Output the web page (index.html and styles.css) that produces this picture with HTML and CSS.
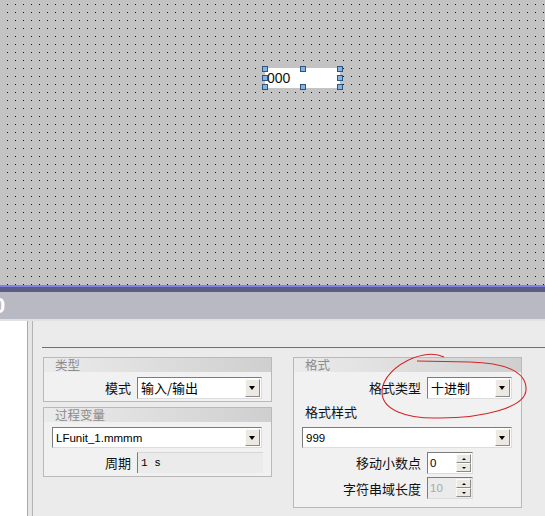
FILE: index.html
```html
<!DOCTYPE html>
<html>
<head>
    <meta charset="utf-8">
    <title>IO field properties</title>
    <link rel="stylesheet" href="styles.css">
</head>
<body>
    <div class="canvas">
        <div class="iofeld">
            <span class="iotext">000</span>
            <i class="griff g1"></i><i class="griff g2"></i><i class="griff g3"></i>
            <i class="griff g4"></i><i class="griff g5"></i>
            <i class="griff g6"></i><i class="griff g7"></i><i class="griff g8"></i>
        </div>
    </div>
    <div class="split-hell"></div>
    <div class="split-dunkel"></div>
    <div class="titel"><span class="titel-rest">0</span></div>

    <div class="unten">
        <div class="baum"></div>
        <div class="spalt"></div>
        <div class="seite">
            <div class="reiterlinie"></div>
            <div class="spalten">
                <div class="spalte">
                    <div class="gruppe">
                        <div class="kopf">类型</div>
                        <div class="inhalt zeilen">
                            <span class="lbl">模式</span>
                            <div class="auswahl"><span class="wert">输入/输出</span><span class="pfeil"></span></div>
                        </div>
                    </div>
                    <div class="gruppe gruppe-2">
                        <div class="kopf">过程变量</div>
                        <div class="inhalt zeilen">
                            <div class="auswahl voll h21"><span class="wert latin">LFunit_1.mmmm</span><span class="pfeil"></span></div>
                            <span class="lbl">周期</span>
                            <div class="nurlesen">1 s</div>
                        </div>
                    </div>
                </div>

                <div class="spalte">
                    <div class="gruppe">
                        <div class="kopf">格式</div>
                        <div class="inhalt zeilen rechts">
                            <span class="lbl">格式类型</span>
                            <div class="auswahl"><span class="wert">十进制</span><span class="pfeil"></span></div>
                            <span class="lbl links voll">格式样式</span>
                            <div class="auswahl voll h21"><span class="wert latin">999</span><span class="pfeil"></span></div>
                            <span class="lbl">移动小数点</span>
                            <div class="dreh"><span class="wert latin">0</span><span class="knoepfe"><i class="auf"></i><i class="ab"></i></span></div>
                            <span class="lbl">字符串域长度</span>
                            <div class="dreh aus"><span class="wert latin">10</span><span class="knoepfe"><i class="auf"></i><i class="ab"></i></span></div>
                        </div>
                    </div>
                </div>
            </div>
        </div>
    </div>

    <svg class="markierung" width="545" height="516" viewBox="0 0 545 516">
        <path d="M444 357 Q432 351 413 358 C396 365 382 378 382 392 C382 409 404 419 440 418 C482 418 525 408 526 390 C527 372 506 363 470 362 L417 361"
              fill="none" stroke="#d42424" stroke-width="1.1"/>
    </svg>
</body>
</html>
```

FILE: styles.css
```css
* {box-sizing: border-box;}
body {
    margin: 0;
    width: 545px;
    height: 516px;
    overflow: hidden;
    position: relative;
    background: #ebebeb;
    font-family: "Noto Sans CJK SC", sans-serif;
    font-size: 13px;
    color: #000;}

/* Zeichenfläche */
.canvas {
    position: relative;
    height: 285px;
    background-color: #c3c3c3;
    background-image: conic-gradient(at 1px 1px, #c3c3c3 75%, #111 0);
    background-size: 8px 8px;
    background-position: 7px 4px;}
.iofeld {
    position: absolute;
    left: 265px;
    top: 68px;
    width: 75px;
    height: 20px;
    background: #fff;}
.iotext {
    display: block;
    padding-left: 2px;
    font: 14px/20px "Liberation Sans", sans-serif;
    color: #111;}
.griff {
    position: absolute;
    width: 6px;
    height: 6px;
    background: #86b4e0;
    border: 1px solid #2e5582;}
.g1 {left: -3px; top: -2px;}
.g2 {left: 35px; top: -2px;}
.g3 {left: 72px; top: -2px;}
.g4 {left: -3px; top: 7px;}
.g5 {left: 72px; top: 7px;}
.g6 {left: -3px; top: 16px;}
.g7 {left: 35px; top: 16px;}
.g8 {left: 72px; top: 16px;}

.split-hell {height: 2px; background: #8282e2;}
.split-dunkel {height: 5px; background: #5c5c88;}
.titel {
    height: 27px;
    background: #b9b9c4;
    color: #fff;
    font: bold 22px/27px "Liberation Sans", sans-serif;
    overflow: hidden;
    white-space: nowrap;}
.titel-rest {margin-left: -7px;}

/* Eigenschaften */
.unten {
    display: flex;
    height: 197px;
    border-top: 2px solid #e2e2e2;}
.baum {width: 28px; background: #fff; border-right: 1px solid #a9a9a9;}
.spalt {width: 4px; background: #e6e6e6;}
.seite {
    flex: 1;
    border-left: 1px solid #b4b4b4;
    padding: 26px 0 0 9px;}
.reiterlinie {border-top: 1px solid #707070;}
.spalten {
    display: flex;
    gap: 21px;
    padding: 9px 0 0 1px;}
.spalte {width: 229px;}

.gruppe {
    border: 1px solid #b9b9b9;
    background: #f1f1f1;}
.gruppe-2 {margin-top: 5px;}
.kopf {
    height: 14px;
    padding-left: 11px;
    background: linear-gradient(to right, #ebebeb, #cfcfcf);
    color: #8b8b8b;
    font-size: 12.5px;
    line-height: 14px;}
.inhalt {padding: 5px 9px 2px 8px;}
.gruppe-2 .inhalt {padding-bottom: 3px;}
.rechts {padding-bottom: 8px;}
.zeilen {
    display: grid;
    grid-template-columns: 79px 1fr;
    column-gap: 6px;
    row-gap: 4px;
    align-items: center;}
.rechts.zeilen {grid-template-columns: 119px 1fr;}
.rechts.zeilen > .dreh + .lbl + .dreh {margin-top: -1px;}
.lbl {text-align: right; line-height: 16px; white-space: nowrap; color: #111;}
.lbl.links {text-align: left; padding-left: 3px; line-height: 18px; margin: 0 0 2px;}
.voll {grid-column: 1 / -1;}

.auswahl, .dreh {
    display: flex;
    height: 22px;
    background: #fff;
    border: 1px solid;
    border-color: #7c7c7c #dcdcdc #dcdcdc #7c7c7c;
    padding: 1px;}
.h21 {height: 21px;}
.wert {
    flex: 1;
    padding-left: 2px;
    line-height: 18px;
    white-space: nowrap;
    overflow: hidden;}
.latin {font: 11.5px/18px "Liberation Sans", sans-serif;}
.pfeil {
    position: relative;
    width: 15px;
    background: #ebe9e1;
    border: 1px solid;
    border-color: #fbfbfb #8a8a8a #8a8a8a #fbfbfb;}
.pfeil::after {
    content: "";
    position: absolute;
    left: 3px;
    top: 6px;
    border-left: 3.5px solid transparent;
    border-right: 3.5px solid transparent;
    border-top: 4px solid #000;}

.nurlesen {
    height: 21px;
    margin-right: -1px;
    background: #ebebeb;
    border-left: 1px solid #7c7c7c;
    border-top: 1px solid #d6d6d6;
    padding-left: 3px;
    font: 11px/20px "Liberation Mono", monospace;}

.dreh {width: 46px;}
.dreh .wert {padding-left: 1px;}
.dreh.aus {background: #ebebeb;}
.dreh.aus .wert {color: #a8a8a8;}
.knoepfe {
    display: flex;
    flex-direction: column;
    width: 15px;}
.knoepfe i {
    position: relative;
    flex: 1;
    background: #ebe9e1;
    border: 1px solid;
    border-color: #fbfbfb #8a8a8a #8a8a8a #fbfbfb;}
.knoepfe i::after {
    content: "";
    position: absolute;
    left: 5px;
    top: 3px;
    border-left: 2px solid transparent;
    border-right: 2px solid transparent;}
.knoepfe .auf::after {border-bottom: 2px solid #000;}
.knoepfe .ab::after {border-top: 2px solid #000;}

.markierung {
    position: absolute;
    left: 0;
    top: 0;
    pointer-events: none;}
```
